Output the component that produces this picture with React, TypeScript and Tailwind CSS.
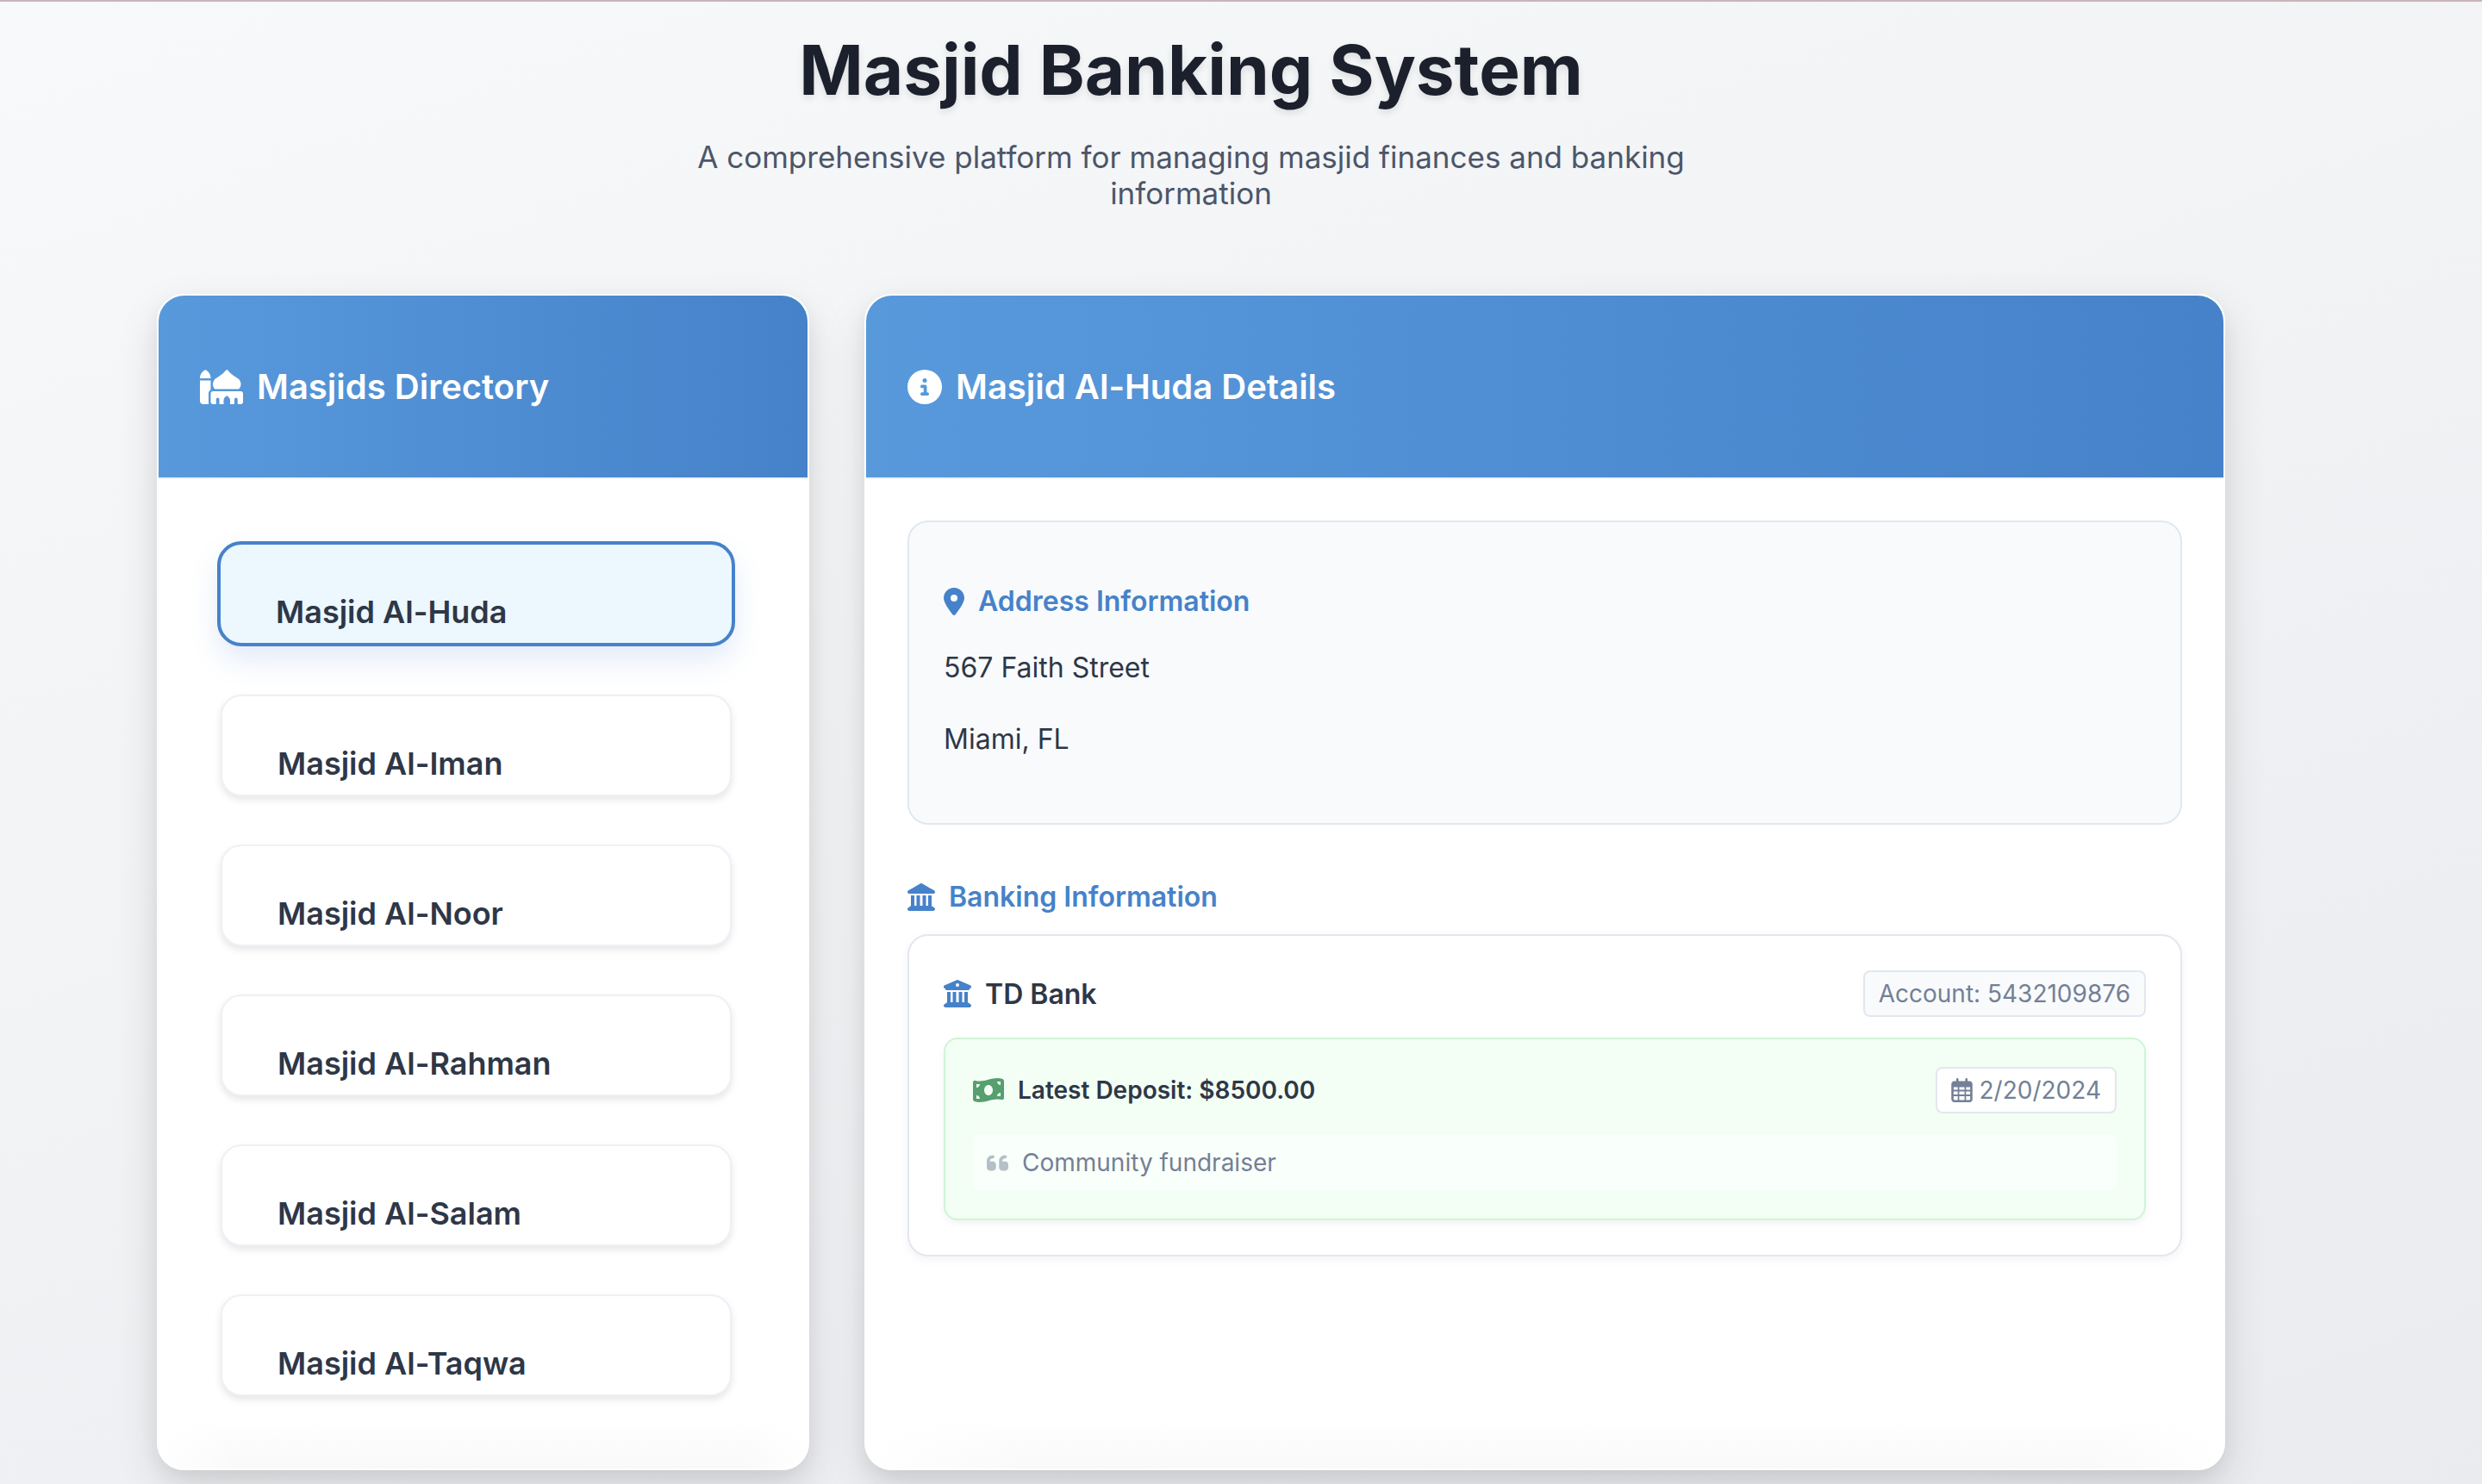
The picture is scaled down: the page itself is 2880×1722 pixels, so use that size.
import type { ReactNode } from "react";
import {
  FaMosque,
  FaCircleInfo,
  FaLocationDot,
  FaLandmark,
  FaBuildingColumns,
  FaMoneyBillWave,
  FaQuoteLeft,
} from "react-icons/fa6";

const masjids = [
  "Masjid Al-Huda",
  "Masjid Al-Iman",
  "Masjid Al-Noor",
  "Masjid Al-Rahman",
  "Masjid Al-Salam",
  "Masjid Al-Taqwa",
];

function CalendarIcon() {
  return (
    <svg viewBox="0 0 448 512" fill="currentColor" className="h-7 w-[25px]" aria-hidden="true">
      <path
        fillRule="evenodd"
        d="M128 0c13.300 0 24 10.700 24 24v40h144V24c0-13.300 10.700-24 24-24s24 10.700 24 24v40h40c35.300 0 64 28.700 64 64v320c0 35.300-28.700 64-64 64H64c-35.300 0-64-28.700-64-64V128c0-35.300 28.700-64 64-64h40V24c0-13.300 10.700-24 24-24zM48 192v56h88v-56zM168 192v56h112v-56zM312 192v56h88v-56zM48 284v64h88v-64zM168 284v64h112v-64zM312 284v64h88v-64zM48 384v64c0 8.800 7.200 16 16 16h72v-80zM168 384v80h112v-80zM312 384v80h72c8.800 0 16-7.200 16-16v-64z"
      />
    </svg>
  );
}

function Panel({ icon, title, children }: { icon: ReactNode; title: string; children: ReactNode }) {
  return (
    <section className="flex flex-col overflow-hidden rounded-[32px] border-2 border-white bg-[linear-gradient(90deg,#fff,transparent_12%,transparent_90%,#fff),linear-gradient(0deg,#f9f9f9,#fff_60px)] shadow-[0_20px_50px_rgba(0,0,0,0.12),0_8px_20px_rgba(0,0,0,0.05)]">
      <header className="flex h-[213px] items-center gap-4 border-b-2 border-[#edf2f7] bg-[linear-gradient(90deg,#5899dc,#4682c9)] px-12 text-white">
        {icon}
        <h2 className="text-[40px] leading-[48px] font-semibold">{title}</h2>
      </header>
      {children}
    </section>
  );
}

export default function App() {
  return (
    <div className="min-h-screen border-t-2 border-[#c9b4b8] bg-[linear-gradient(160deg,#f7f9fb,#f1f2f4_50%,#eaebef)] pr-[116px] font-['Inter',sans-serif] text-[#2e3747]">
      <main className="mx-auto max-w-[2400px]">
        <div className="flex flex-col items-center pt-[30px] text-center">
          <h1 className="text-[80px] leading-[97px] font-bold text-[#1c202c] [text-shadow:0_4px_8px_rgba(0,0,0,0.1)]">
            Masjid Banking System
          </h1>
          <p className="mt-8 max-w-[1200px] text-[35px] leading-[42px] text-[#4c5669]">
            A comprehensive platform for managing masjid finances and banking information
          </p>
        </div>

        <div className="mt-[96px] grid grid-cols-[757fr_1579fr] gap-16">
          <Panel icon={<FaMosque className="h-10 w-[50px]" />} title="Masjids Directory">
            <ul className="flex flex-col gap-14 pt-[72px] pr-[88px] pb-[84px] pl-[72px]">
              {masjids.map((name, i) => (
                <li key={name} className={i === 0 ? "-mx-1" : ""}>
                  <button
                    type="button"
                    className={
                      i === 0
                        ? "block w-full rounded-[28px] border-4 border-[#4682c9] bg-[#ecf7fe] px-16 pt-14 pb-3.5 text-left text-4xl leading-[44px] font-semibold shadow-[0_16px_32px_rgba(66,120,210,0.15)]"
                        : "block w-full rounded-3xl border-2 border-[#edf1f6] bg-white px-16 pt-14 pb-3.5 text-left text-4xl leading-[44px] font-semibold shadow-[0_4px_8px_rgba(0,0,0,0.1)]"
                    }
                  >
                    {name}
                  </button>
                </li>
              ))}
            </ul>
          </Panel>

          <Panel icon={<FaCircleInfo className="size-10" />} title="Masjid Al-Huda Details">
            <div className="p-12 text-[32px] leading-[39px]">
              <div className="rounded-3xl border-2 border-[#e2e7ef] bg-[#f9fafc] px-10 pt-[72px] pb-[78px]">
                <h3 className="flex items-center gap-4 font-semibold text-[#4682c9]">
                  <FaLocationDot className="h-8 w-6" />
                  Address Information
                </h3>
                <p className="mt-[38px]">567 Faith Street</p>
                <p className="mt-11">Miami, FL</p>
              </div>

              <h3 className="mt-16 mb-6 flex items-center gap-4 font-semibold text-[#4682c9]">
                <FaLandmark className="size-8" />
                Banking Information
              </h3>

              <article className="rounded-3xl border-2 border-[#e2e7ef] bg-white p-10 shadow-[0_4px_12px_rgba(0,0,0,0.05)]">
                <div className="flex items-center justify-between">
                  <h4 className="flex items-center gap-4 font-semibold">
                    <FaBuildingColumns className="size-8 text-[#4682c9]" />
                    TD Bank
                  </h4>
                  <span className="rounded-lg border-2 border-[#e2e7ef] bg-[#f9fafc] px-4 py-2 text-[28px] leading-[34px] text-[#738096]">
                    Account: 5432109876
                  </span>
                </div>

                <div className="mt-6 rounded-2xl border-2 border-[#cdf5d6] bg-[#f3fef4] p-8 text-[28px] leading-[34px] shadow-[0_4px_8px_rgba(0,0,0,0.05)]">
                  <div className="flex items-center justify-between">
                    <p className="flex items-center gap-4 font-semibold">
                      <FaMoneyBillWave className="h-8 w-9 text-[#569f6f]" />
                      Latest Deposit: $8500.00
                    </p>
                    <span className="flex items-center gap-2 rounded-lg border-2 border-[#e2e7ef] bg-white px-4 py-2 text-[#738096]">
                      <CalendarIcon />
                      2/20/2024
                    </span>
                  </div>
                  <p className="mt-6 flex items-center gap-4 rounded-lg bg-white/50 p-4 text-[#738096]">
                    <FaQuoteLeft className="h-[29px] w-[25px] opacity-50" />
                    Community fundraiser
                  </p>
                </div>
              </article>
            </div>
          </Panel>
        </div>
      </main>
    </div>
  );
}
